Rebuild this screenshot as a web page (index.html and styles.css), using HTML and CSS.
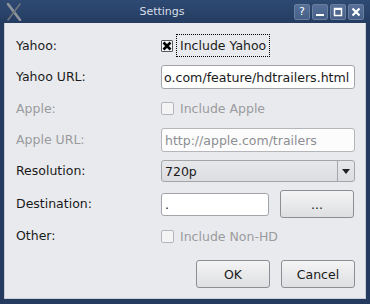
FILE: index.html
```html
<!DOCTYPE html>
<html>
<head>
<meta charset="utf-8">
<link rel="stylesheet" href="styles.css">
</head>
<body>
<div class="window">
  <div class="titlebar">
    <svg class="logo" width="16" height="18" viewBox="0 0 16 18">
      <path d="M2 1 L14 17" stroke="#8d939b" stroke-width="2.6" stroke-linecap="round"/>
      <path d="M14 1 L2 17" stroke="#6f757d" stroke-width="1.6" stroke-linecap="round"/>
    </svg>
    <div class="title">Settings</div>
    <div class="tbuttons">
      <div class="tbtn"><span class="q">?</span></div>
      <div class="tbtn"><svg width="14" height="14" viewBox="0 0 14 14"><rect x="3" y="9" width="8" height="2" fill="#fff"/></svg></div>
      <div class="tbtn"><svg width="14" height="14" viewBox="0 0 14 14"><rect x="3.5" y="3.5" width="7" height="7" fill="none" stroke="#fff" stroke-width="1.5"/><rect x="3" y="3" width="8" height="2" fill="#fff"/></svg></div>
      <div class="tbtn"><svg width="14" height="14" viewBox="0 0 14 14"><path d="M3.5 3.5 L10.5 10.5 M10.5 3.5 L3.5 10.5" stroke="#fff" stroke-width="2.2"/></svg></div>
    </div>
  </div>
  <div class="content">
    <div class="form">
      <div class="label">Yahoo:</div>
      <div class="field">
        <span class="check checked"><svg width="10" height="10" viewBox="0 0 10 10"><path d="M1.5 1.5 L8.5 8.5 M8.5 1.5 L1.5 8.5" stroke="#000" stroke-width="2.6"/></svg></span>
        <span class="focus">Include Yahoo</span>
      </div>

      <div class="label">Yahoo URL:</div>
      <div class="field">
        <div class="input"><span>o.com/feature/hdtrailers.html</span></div>
      </div>

      <div class="label disabled">Apple:</div>
      <div class="field">
        <span class="check off"></span>
        <span class="ctext disabled">Include Apple</span>
      </div>

      <div class="label disabled">Apple URL:</div>
      <div class="field">
        <div class="input dis"><span>http://apple.com/trailers</span></div>
      </div>

      <div class="label">Resolution:</div>
      <div class="field">
        <div class="combo">
          <span class="ctextval">720p</span>
          <span class="arrow"><svg width="8" height="5" viewBox="0 0 8 5"><path d="M0 0 H8 L4 5 Z" fill="#222"/></svg></span>
        </div>
      </div>

      <div class="label">Destination:</div>
      <div class="field dest">
        <div class="input short"><span>.</span></div>
        <div class="button">...</div>
      </div>

      <div class="label">Other:</div>
      <div class="field">
        <span class="check off"></span>
        <span class="ctext disabled">Include Non-HD</span>
      </div>
    </div>
    <div class="actions">
      <div class="button">OK</div>
      <div class="button">Cancel</div>
    </div>
  </div>
</div>
</body>
</html>
```

FILE: styles.css
```css
html, body {
  margin: 0;
  padding: 0;
}
body {
  width: 370px;
  height: 304px;
  overflow: hidden;
  font-family: "DejaVu Sans", sans-serif;
  font-size: 12px;
  color: #1a1a1a;
}
.window {
  width: 370px;
  height: 304px;
  box-sizing: border-box;
  background: #243a5e;
  padding: 0 4px 5px 4px;
  display: flex;
  flex-direction: column;
}
.titlebar {
  height: 23px;
  margin: 0 -4px;
  padding: 0 6px 0 6px;
  display: flex;
  align-items: center;
  background: linear-gradient(#2f4a72, #243c61);
  color: #d8dee8;
}
.logo {
  flex: none;
  margin-top: 1px;
}
.title {
  flex: 1;
  text-align: center;
  font-size: 11px;
  padding-left: 8px;
  padding-bottom: 1px;
}
.tbuttons {
  display: flex;
  gap: 2px;
}
.tbtn {
  width: 16px;
  height: 16px;
  box-sizing: border-box;
  border: 1px solid #6a7f9f;
  border-radius: 2px;
  background: linear-gradient(#56709a, #465f86);
  display: flex;
  align-items: center;
  justify-content: center;
}
.tbtn .q {
  color: #fff;
  font-size: 11px;
  line-height: 1;
}
.content {
  flex: 1;
  background: #e9eaed;
  box-shadow: inset 1px 0 0 #c9ccd2, inset -1px 0 0 #c9ccd2, inset 0 -1px 0 #c9ccd2;
  padding: 11px 11px 0 12px;
}
.form {
  display: grid;
  grid-template-columns: 145px 194px;
  grid-template-rows: 23px 24px 23px 24px 22px 28px 20px;
  row-gap: 8px;
  align-items: center;
}
.label {
  font-size: 12.5px;
  padding-bottom: 1px;
}
.disabled {
  color: #9a9b9e;
}
.field {
  display: flex;
  align-items: center;
  height: 100%;
}
.check {
  width: 12px;
  height: 12px;
  box-sizing: border-box;
  border: 1px solid #8f9297;
  background: #f6f6f6;
  border-radius: 2px;
  display: flex;
  align-items: center;
  justify-content: center;
  flex: none;
}
.check.checked {
  border-color: #555a60;
  border-radius: 1px;
}
.check.off {
  width: 13px;
  height: 13px;
  border-color: #b4b6ba;
  background: #f4f4f5;
}
.focus {
  margin-left: 3px;
  height: 23px;
  box-sizing: border-box;
  border: 1px dotted #000;
  padding: 0 3px;
  display: flex;
  align-items: center;
  font-size: 12.5px;
}
.ctext {
  margin-left: 6px;
  font-size: 12.5px;
}
.input {
  width: 194px;
  height: 24px;
  box-sizing: border-box;
  border: 1px solid #a2a5aa;
  border-radius: 3px;
  background: #fff;
  display: flex;
  justify-content: flex-start;
  align-items: center;
  overflow: hidden;
  white-space: nowrap;
  padding: 0 3px 0 2px;
  font-size: 12.6px;
}
.input.dis {
  color: #8c8e92;
  border-color: #b4b6ba;
  background: #fcfcfc;
  font-size: 12.5px;
  padding-left: 3px;
}
.input.short {
  width: 108px;
  height: 23px;
  padding-left: 3px;
}
.combo {
  width: 194px;
  height: 22px;
  box-sizing: border-box;
  border: 1px solid #a2a5aa;
  border-radius: 3px;
  background: linear-gradient(#e7e8ea, #dcdde0);
  display: flex;
  align-items: center;
  font-size: 12.5px;
}
.ctextval {
  flex: 1;
  padding-left: 3px;
}
.arrow {
  width: 16px;
  height: 100%;
  border-left: 1px solid #a2a5aa;
  display: flex;
  align-items: center;
  justify-content: center;
}
.dest {
  gap: 11px;
}
.button {
  width: 74px;
  height: 28px;
  box-sizing: border-box;
  border: 1px solid #8b8e93;
  border-radius: 3px;
  background: linear-gradient(#f4f4f5, #dedfe1);
  display: flex;
  align-items: center;
  justify-content: center;
  font-size: 12.5px;
}
.actions {
  display: flex;
  justify-content: flex-end;
  gap: 11px;
  margin-top: 14px;
}
```
